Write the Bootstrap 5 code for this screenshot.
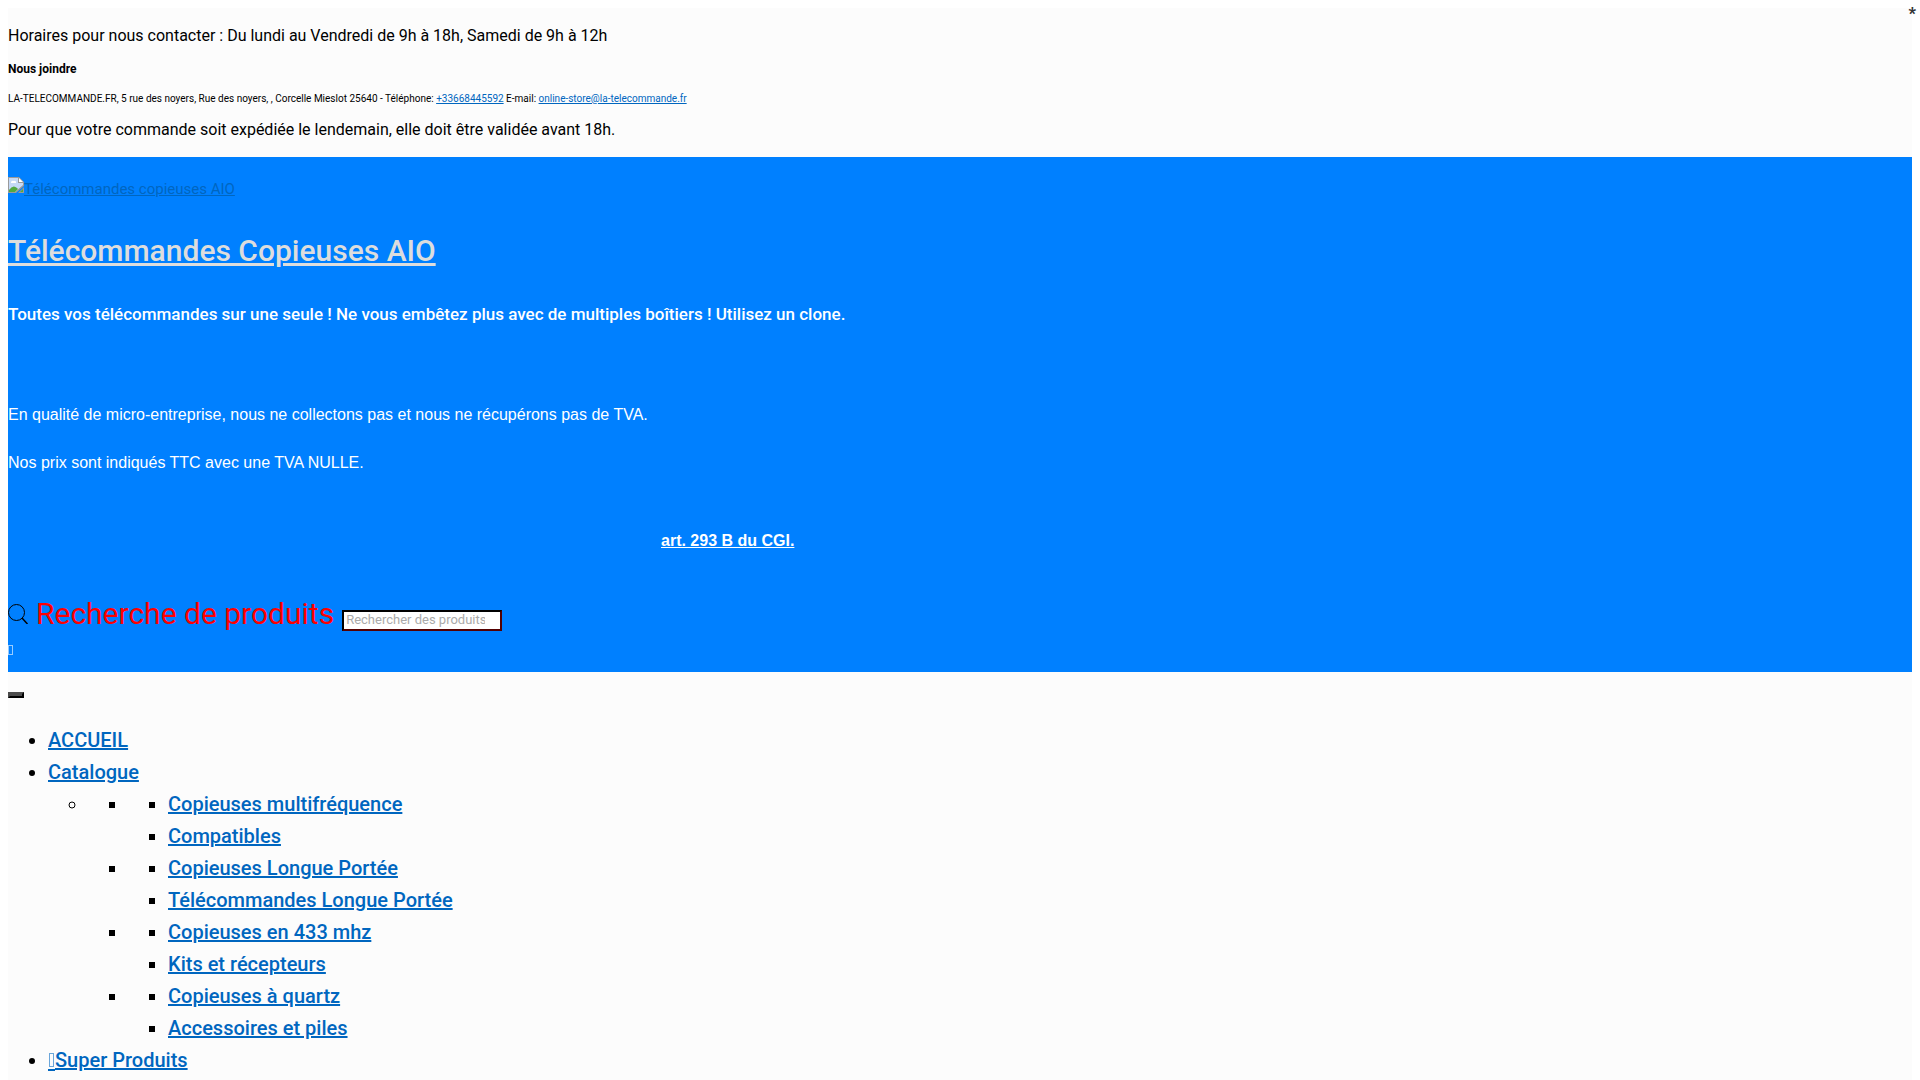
<!DOCTYPE html>
<html lang="fr">
<head>
<meta charset="utf-8">
<meta name="viewport" content="width=device-width, initial-scale=1">
<title>Télécommandes Copieuses AIO</title>
<link href="https://cdn.jsdelivr.net/npm/bootstrap@5.3.0/dist/css/bootstrap.min.css" rel="stylesheet">
<style>
body { font-family: Roboto, "Liberation Sans", sans-serif; font-size: 16px; line-height: 24px; color: #000; background: #fff; }
.shell { margin: 8px 8px 0; background: #fcfcfc; min-height: calc(100vh - 8px); }
a { color: #0066bf; }
.info-bar { padding: 16px 0 15px; }
.info-bar h2 { font-size: 12px; line-height: 16px; font-weight: 700; margin: 13px 0 14px; }
.info-bar address { font-size: 10px; line-height: 16px; margin: 0 0 11px; }
.site-head { background: #0080ff; color: #fff; padding: 20px 0 12px; }
.logo-link { font-size: 15px; line-height: 24px; }
.site-title { font-size: 30px; line-height: 36px; font-weight: 500; margin: 32px 0; }
.site-title a { color: #ddd; }
.tagline { font-size: 17px; line-height: 24px; font-weight: 500; margin: 0 0 77px; padding-top: 1px; }
.legal { font-family: "Liberation Sans", Arial, sans-serif; }
.legal p { margin: 0 0 24px; }
.legal .article { margin: 0 0 41px; padding: 30px 0 0; width: 75.6%; }
.legal .article a { color: #fff; }
.search-label { color: #f00; font-size: 30px; line-height: 40px; }
.search-row { margin-bottom: 6px; }
.search-field { width: 160px; height: 21px; border: 2px solid; border-color: #000 #500 #500 #000; padding: 0 2px; font-size: 13px; background: #fff; }
.search-field::placeholder { color: #aaa; opacity: 1; }
.cart-link { color: #99ccff; line-height: 20px; }
.cart-link svg, .site-menu svg { display: inline; vertical-align: -4px; }
.menu-toggle { display: block; width: 16px; height: 6px; padding: 0; border: 2px solid; border-color: #4c4c4c #000 #000 #4c4c4c; background: #4c4c4c; }
.site-menu { padding: 20px 0 0; }
.site-menu ul { margin: 0; padding-left: 40px; font-size: 20px; line-height: 32px; font-weight: 500; }
.site-menu > ul { margin-top: 26px; }
.site-menu a { font-weight: 500; }
.flag { top: 2px; right: 4px; color: #333; font-weight: 900; }
</style>
</head>
<body>
<span class="flag position-absolute">*</span>
<div class="shell">
  <section class="info-bar">
    <p class="m-0">Horaires pour nous contacter : Du lundi au Vendredi de 9h à 18h, Samedi de 9h à 12h</p>
    <h2>Nous joindre</h2>
    <address>LA-TELECOMMANDE.FR, 5 rue des noyers, Rue des noyers, , Corcelle Mieslot 25640 - Téléphone: <a href="tel:+33668445592">+33668445592</a> E-mail: <a href="mailto:online-store@la-telecommande.fr">online-store@la-telecommande.fr</a></address>
    <p class="m-0">Pour que votre commande soit expédiée le lendemain, elle doit être validée avant 18h.</p>
  </section>
  <header class="site-head">
    <a class="logo-link d-flex" href="#"><svg width="16" height="16" viewBox="0 0 16 16" aria-hidden="true"><path d="M0 0H11L16 5V9L8 16H0Z" fill="#9a9a9a"/><path d="M1 1H10V6H15V8L7 15H1Z" fill="#c5d9f7"/><path d="M11 1L15 5H11Z" fill="#fff"/><path d="M3 6a2 2 0 0 1 3-2 1.500 1.500 0 0 1 2 2Z" fill="#fff"/><path d="M1 15V13Q5 7 9 11L10 12L7 15Z" fill="#53a93f"/><path d="M16 10V16H10Z" fill="#9a9a9a"/><path d="M15 12V15H12Z" fill="#53a93f"/></svg><span>Télécommandes copieuses AIO</span></a>
    <h1 class="site-title"><a href="#">Télécommandes Copieuses AIO</a></h1>
    <h2 class="tagline">Toutes vos télécommandes sur une seule ! Ne vous embêtez plus avec de multiples boîtiers ! Utilisez un clone.</h2>
    <div class="legal">
      <p>En qualité de micro-entreprise, nous ne collectons pas et nous ne récupérons pas de TVA.</p>
      <p>Nos prix sont indiqués TTC avec une TVA NULLE.</p>
      <p class="article text-center fw-bold"><a href="#">art. 293 B du CGI.</a></p>
    </div>
    <form class="search-row d-flex align-items-baseline gap-2">
      <svg width="20" height="20" viewBox="0 0 20 20" fill="none" stroke="#000" aria-hidden="true"><circle cx="8.500" cy="8.500" r="8"/><path d="M14 14L19.500 20" stroke-width="1.500"/></svg>
      <label class="search-label" for="q">Recherche de produits</label>
      <input class="search-field" id="q" type="search" placeholder="Rechercher des produits...">
    </form>
    <a class="cart-link d-flex align-items-center" href="#" aria-label="Panier"><svg width="5" height="20" viewBox="0 0 5 20" fill="none" stroke="currentColor" aria-hidden="true"><rect x=".5" y="5.500" width="4" height="9"/></svg></a>
  </header>
  <nav class="site-menu">
    <button class="menu-toggle" type="button" aria-label="Menu"></button>
    <ul>
      <li><a href="#">ACCUEIL</a></li>
      <li><a href="#">Catalogue</a>
        <ul>
          <li>
            <ul>
              <li><ul><li><a href="#">Copieuses multifréquence</a></li><li><a href="#">Compatibles</a></li></ul></li>
              <li><ul><li><a href="#">Copieuses Longue Portée</a></li><li><a href="#">Télécommandes Longue Portée</a></li></ul></li>
              <li><ul><li><a href="#">Copieuses en 433 mhz</a></li><li><a href="#">Kits et récepteurs</a></li></ul></li>
              <li><ul><li><a href="#">Copieuses à quartz</a></li><li><a href="#">Accessoires et piles</a></li></ul></li>
            </ul>
          </li>
        </ul>
      </li>
      <li><a href="#"><svg width="7" height="18" viewBox="0 0 7 18" aria-hidden="true"><rect x="1.500" y=".5" width="4" height="13" fill="none" stroke="#6ba6da"/><path d="M0 16H7V18H0Z" fill="#0066bf"/></svg>Super Produits</a></li>
    </ul>
  </nav>
</div>
<script src="https://cdn.jsdelivr.net/npm/bootstrap@5.3.0/dist/js/bootstrap.bundle.min.js"></script>
</body>
</html>
